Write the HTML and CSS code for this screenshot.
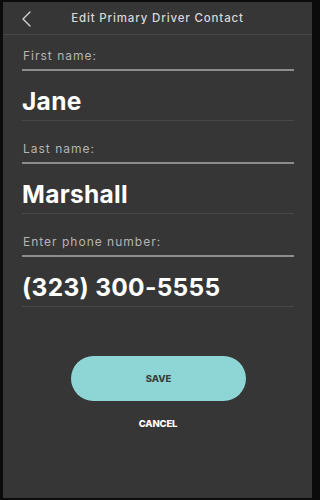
FILE: index.html
```html
<!DOCTYPE html>
<html lang="en">
<head>
<meta charset="utf-8">
<title>Edit Primary Driver Contact</title>
<link rel="stylesheet" href="styles.css">
</head>
<body>
<div class="frame">
  <header class="header">
    <div class="back">
      <svg width="11" height="16" viewBox="0 0 11 16" aria-hidden="true"><polyline points="9,1 2,8 9,15" fill="none" stroke="#d4d4d4" stroke-width="1.4" stroke-linecap="round" stroke-linejoin="round"/></svg>
    </div>
    <h1 class="title">Edit Primary Driver Contact</h1>
    <div></div>
  </header>
  <main class="form">
    <section class="field">
      <div class="label">First name:</div>
      <div class="rule"></div>
      <div class="value">Jane</div>
      <div class="faint"></div>
    </section>
    <section class="field">
      <div class="label">Last name:</div>
      <div class="rule"></div>
      <div class="value">Marshall</div>
      <div class="faint"></div>
    </section>
    <section class="field">
      <div class="label">Enter phone number:</div>
      <div class="rule"></div>
      <div class="value">(323) 300-5555</div>
      <div class="faint"></div>
    </section>
    <div class="actions">
      <button class="save">SAVE</button>
      <div class="cancel">CANCEL</div>
    </div>
  </main>
</div>
</body>
</html>
```

FILE: styles.css
```css
html, body {
  margin: 0;
  padding: 0;
  background: #0b0b0b;
}
.frame {
  margin: 2px 3px;
  width: 309px;
  height: 496px;
  background: #363636;
  font-family: Inter, Lato, "Liberation Sans", sans-serif;
  display: flex;
  flex-direction: column;
}
.header {
  height: 32px;
  border-bottom: 1px solid #474747;
  display: grid;
  grid-template-columns: 40px 1fr 40px;
  align-items: center;
}
.back {
  padding-left: 18px;
  display: flex;
  align-items: center;
  padding-top: 1px;
}
.title {
  margin: 0;
  text-align: center;
  font-size: 11.5px;
  font-weight: 500;
  letter-spacing: 0.85px;
  color: #d8d8d8;
  line-height: 16px;
  white-space: nowrap;
}
.form {
  padding: 13px 18px 0 19px;
  display: flex;
  flex-direction: column;
  gap: 20px;
}
.field {
  display: flex;
  flex-direction: column;
}
.label {
  font-size: 12px;
  line-height: 16px;
  letter-spacing: 1px;
  color: #b4b4b4;
  padding-left: 1px;
}
.rule {
  margin-top: 5px;
  height: 2px;
  background: #8c8c8c;
}
.value {
  margin-top: 15px;
  font-size: 24.5px;
  line-height: 30px;
  font-weight: 700;
  color: #ffffff;
  letter-spacing: 0.3px;
}
.faint {
  margin-top: 4px;
  height: 1px;
  background: #474747;
}
.actions {
  margin-top: 29px;
  display: flex;
  flex-direction: column;
  align-items: center;
}
.save {
  width: 175px;
  height: 45px;
  border: none;
  border-radius: 23px;
  background: #8ed5d5;
  color: #3a3f40;
  font-family: Inter, Lato, "Liberation Sans", sans-serif;
  font-weight: 800;
  font-size: 9.5px;
  letter-spacing: 0;
  margin-left: 1px;
}
.cancel {
  margin-top: 16px;
  font-size: 9.5px;
  line-height: 14px;
  font-weight: 800;
  letter-spacing: -0.2px;
  color: #ffffff;
}
```
